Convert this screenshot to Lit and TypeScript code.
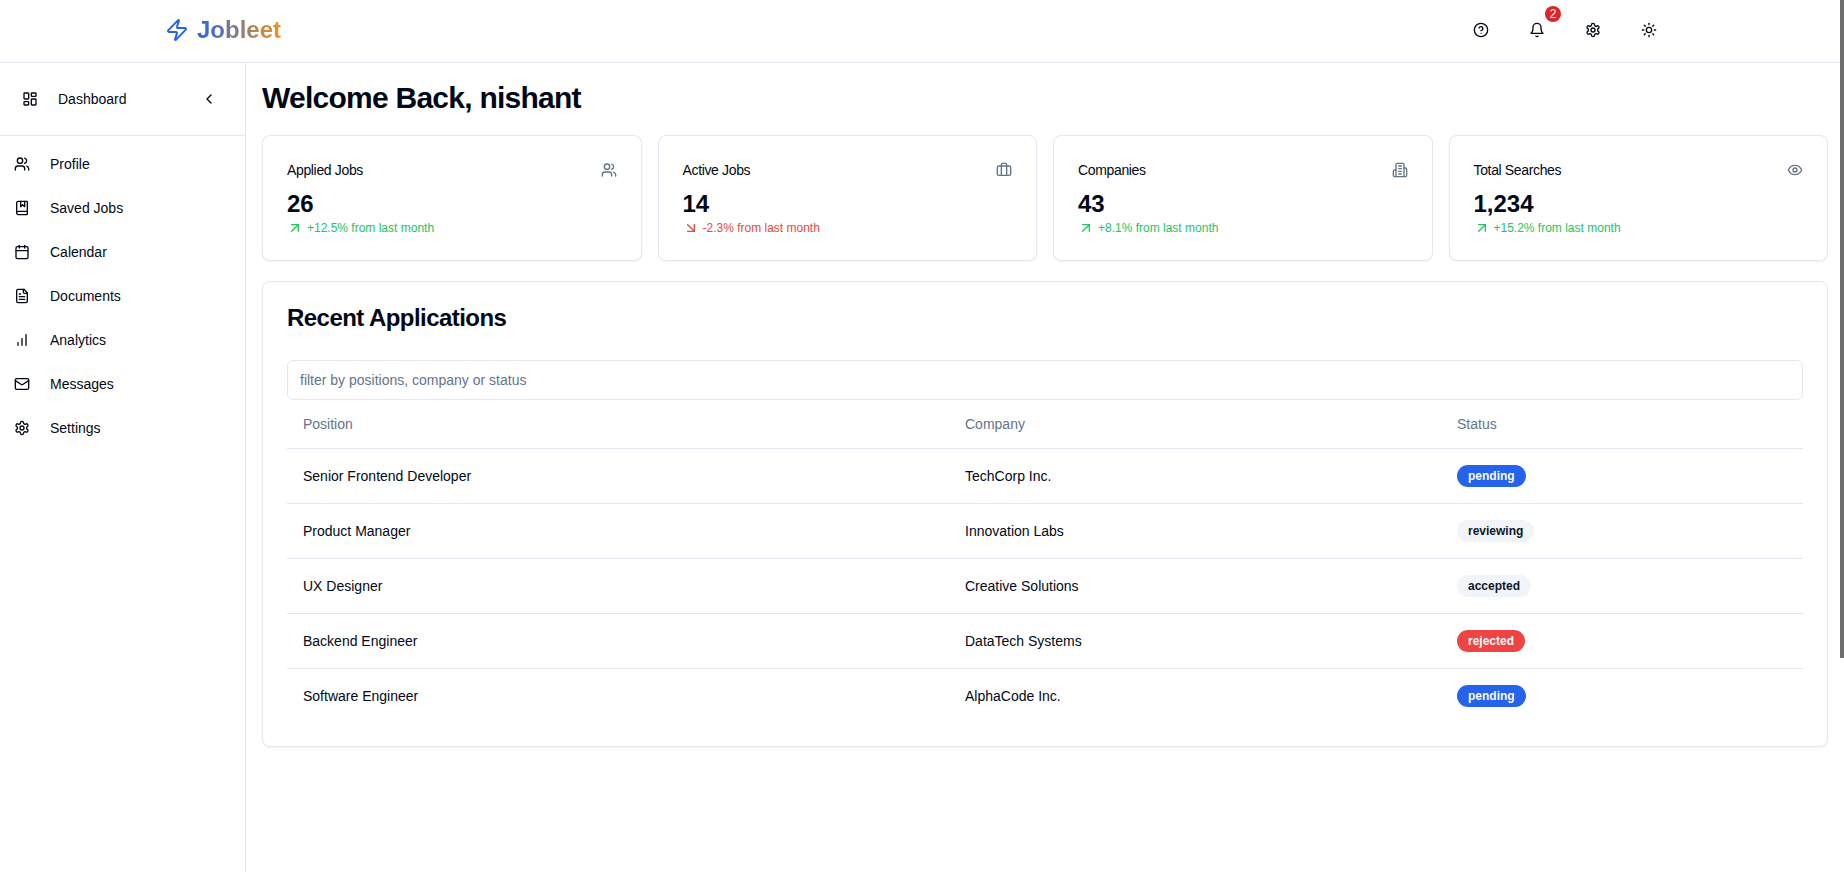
import { css, html, LitElement, svg } from 'lit';
import { customElement } from 'lit/decorators.js';
import { classMap } from 'lit/directives/class-map.js';

const GEAR = svg`<path d="M12.22 2h-.44a2 2 0 0 0-2 2v.18a2 2 0 0 1-1 1.73l-.43.25a2 2 0 0 1-2 0l-.15-.08a2 2 0 0 0-2.73.73l-.22.38a2 2 0 0 0 .73 2.73l.15.1a2 2 0 0 1 1 1.72v.51a2 2 0 0 1-1 1.74l-.15.09a2 2 0 0 0-.73 2.73l.22.38a2 2 0 0 0 2.73.73l.15-.08a2 2 0 0 1 2 0l.43.25a2 2 0 0 1 1 1.73V20a2 2 0 0 0 2 2h.44a2 2 0 0 0 2-2v-.18a2 2 0 0 1 1-1.73l.43-.25a2 2 0 0 1 2 0l.15.08a2 2 0 0 0 2.73-.73l.22-.39a2 2 0 0 0-.73-2.73l-.15-.08a2 2 0 0 1-1-1.74v-.5a2 2 0 0 1 1-1.74l.15-.09a2 2 0 0 0 .73-2.73l-.22-.38a2 2 0 0 0-2.73-.73l-.15.08a2 2 0 0 1-2 0l-.43-.25a2 2 0 0 1-1-1.73V4a2 2 0 0 0-2-2z"/><circle cx="12" cy="12" r="3"/>`;

const ICONS = {
  zap: svg`<path d="M4 14a1 1 0 0 1-.78-1.63l9.9-10.2a.5.5 0 0 1 .86.46l-1.92 6.02A1 1 0 0 0 13 10h7a1 1 0 0 1 .78 1.63l-9.9 10.2a.5.5 0 0 1-.86-.46l1.92-6.02A1 1 0 0 0 11 14z"/>`,
  help: svg`<circle cx="12" cy="12" r="10"/><path d="M9.09 9a3 3 0 0 1 5.83 1c0 2-3 3-3 3"/><path d="M12 17h.01"/>`,
  bell: svg`<path d="M6 8a6 6 0 0 1 12 0c0 7 3 9 3 9H3s3-2 3-9"/><path d="M10.3 21a1.94 1.94 0 0 0 3.4 0"/>`,
  gear: GEAR,
  sun: svg`<circle cx="12" cy="12" r="4"/><path d="M12 2v2"/><path d="M12 20v2"/><path d="m4.93 4.93 1.41 1.41"/><path d="m17.66 17.66 1.41 1.41"/><path d="M2 12h2"/><path d="M20 12h2"/><path d="m6.34 17.66-1.41 1.41"/><path d="m19.07 4.93-1.41 1.41"/>`,
  dashboard: svg`<rect x="3" y="3" width="7" height="9" rx="1"/><rect x="14" y="3" width="7" height="5" rx="1"/><rect x="14" y="12" width="7" height="9" rx="1"/><rect x="3" y="16" width="7" height="5" rx="1"/>`,
  chevron: svg`<path d="m15 18-6-6 6-6"/>`,
  users: svg`<path d="M16 21v-2a4 4 0 0 0-4-4H6a4 4 0 0 0-4 4v2"/><circle cx="9" cy="7" r="4"/><path d="M22 21v-2a4 4 0 0 0-3-3.87"/><path d="M16 3.13a4 4 0 0 1 0 7.75"/>`,
  book: svg`<path d="M10 2v8l3-3 3 3V2"/><path d="M4 19.5v-15A2.5 2.5 0 0 1 6.5 2H19a1 1 0 0 1 1 1v18a1 1 0 0 1-1 1H6.5a1 1 0 0 1 0-5H20"/>`,
  calendar: svg`<path d="M8 2v4"/><path d="M16 2v4"/><rect x="3" y="4" width="18" height="18" rx="2"/><path d="M3 10h18"/>`,
  file: svg`<path d="M15 2H6a2 2 0 0 0-2 2v16a2 2 0 0 0 2 2h12a2 2 0 0 0 2-2V7Z"/><path d="M14 2v4a2 2 0 0 0 2 2h4"/><path d="M10 9H8"/><path d="M16 13H8"/><path d="M16 17H8"/>`,
  chart: svg`<path d="M12 20V10"/><path d="M18 20V4"/><path d="M6 20v-4"/>`,
  mail: svg`<rect x="2" y="4" width="20" height="16" rx="2"/><path d="m22 7-8.97 5.7a1.94 1.94 0 0 1-2.06 0L2 7"/>`,
  briefcase: svg`<path d="M16 20V4a2 2 0 0 0-2-2h-4a2 2 0 0 0-2 2v16"/><rect x="2" y="6" width="20" height="14" rx="2"/>`,
  building: svg`<path d="M6 22V4a2 2 0 0 1 2-2h8a2 2 0 0 1 2 2v18Z"/><path d="M6 12H4a2 2 0 0 0-2 2v6a2 2 0 0 0 2 2h2"/><path d="M18 9h2a2 2 0 0 1 2 2v9a2 2 0 0 1-2 2h-2"/><path d="M10 6h4"/><path d="M10 10h4"/><path d="M10 14h4"/><path d="M10 18h4"/>`,
  eye: svg`<path d="M2 12s3-7 10-7 10 7 10 7-3 7-10 7-10-7-10-7Z"/><circle cx="12" cy="12" r="3"/>`,
  up: svg`<path d="M7 7h10v10"/><path d="M7 17 17 7"/>`,
  down: svg`<path d="m7 7 10 10"/><path d="M17 7v10H7"/>`,
};

type IconName = keyof typeof ICONS;

const icon = (name: IconName, cls = '') => html`
  <svg class="icon ${cls}" viewBox="0 0 24 24" fill="none" stroke="currentColor" stroke-width="2" stroke-linecap="round" stroke-linejoin="round">${ICONS[name]}</svg>
`;

const NAV: { label: string; icon: IconName }[] = [
  { label: 'Profile', icon: 'users' },
  { label: 'Saved Jobs', icon: 'book' },
  { label: 'Calendar', icon: 'calendar' },
  { label: 'Documents', icon: 'file' },
  { label: 'Analytics', icon: 'chart' },
  { label: 'Messages', icon: 'mail' },
  { label: 'Settings', icon: 'gear' },
];

const STATS: { title: string; value: string; change: string; up: boolean; icon: IconName }[] = [
  { title: 'Applied Jobs', value: '26', change: '+12.5% from last month', up: true, icon: 'users' },
  { title: 'Active Jobs', value: '14', change: '-2.3% from last month', up: false, icon: 'briefcase' },
  { title: 'Companies', value: '43', change: '+8.1% from last month', up: true, icon: 'building' },
  { title: 'Total Searches', value: '1,234', change: '+15.2% from last month', up: true, icon: 'eye' },
];

const APPLICATIONS = [
  { position: 'Senior Frontend Developer', company: 'TechCorp Inc.', status: 'pending' },
  { position: 'Product Manager', company: 'Innovation Labs', status: 'reviewing' },
  { position: 'UX Designer', company: 'Creative Solutions', status: 'accepted' },
  { position: 'Backend Engineer', company: 'DataTech Systems', status: 'rejected' },
  { position: 'Software Engineer', company: 'AlphaCode Inc.', status: 'pending' },
];

@customElement('app-root')
export class AppRoot extends LitElement {
  static override styles = css`
    :host {
      display: block;
      position: relative;
      height: 872px;
      overflow: hidden;
      background: #fff;
      color: #020817;
      font-family: 'Liberation Sans', Arial, sans-serif;
      font-size: 14px;
    }

    * {
      box-sizing: border-box;
    }

    .icon {
      display: block;
      width: 16px;
      height: 16px;
      flex: none;
    }

    .header {
      display: flex;
      align-items: center;
      justify-content: space-between;
      height: 63px;
      padding: 0 175px 0 165px;
      border-bottom: 1px solid #e2e8f0;
    }

    .logo {
      display: flex;
      align-items: center;
      gap: 8px;
      margin-top: -2px;
    }

    .logo .icon {
      width: 24px;
      height: 24px;
      color: #2563eb;
    }

    .logo span {
      font-size: 24px;
      font-weight: 700;
      line-height: 32px;
      background: linear-gradient(to right, #2563eb, #f59312);
      -webkit-background-clip: text;
      background-clip: text;
      color: transparent;
    }

    .actions {
      display: flex;
      gap: 16px;
      margin-top: -2px;
    }

    .action {
      position: relative;
      display: flex;
      align-items: center;
      justify-content: center;
      width: 40px;
      height: 40px;
    }

    .badge {
      position: absolute;
      top: -4px;
      right: -4px;
      display: flex;
      align-items: center;
      justify-content: center;
      width: 16px;
      height: 16px;
      border-radius: 50%;
      background: #dc2626;
      color: #fff;
      font-size: 12px;
    }

    .body {
      display: flex;
      height: 809px;
    }

    .sidebar {
      flex: none;
      width: 246px;
      border-right: 1px solid #e2e8f0;
    }

    .sidebar-top {
      display: flex;
      align-items: center;
      height: 73px;
      padding: 0 28px 0 22px;
      border-bottom: 1px solid #e2e8f0;
    }

    .sidebar-top .label {
      flex: 1;
      margin-left: 20px;
    }

    .nav {
      display: flex;
      flex-direction: column;
      gap: 16px;
      padding: 14px;
    }

    .nav-item {
      display: flex;
      align-items: center;
      gap: 20px;
      height: 28px;
    }

    .main {
      flex: 1;
      min-width: 0;
      padding: 15px 16px 16px;
    }

    h1 {
      margin: 0 0 17px;
      font-size: 30px;
      font-weight: 700;
      line-height: 40px;
      letter-spacing: -0.75px;
    }

    .stats {
      display: grid;
      grid-template-columns: repeat(4, 1fr);
      gap: 16px;
      margin-bottom: 20px;
    }

    .card {
      border: 1px solid #e2e8f0;
      border-radius: 8px;
      background: #fff;
      box-shadow: 0 1px 2px 0 rgba(0, 0, 0, 0.05);
    }

    .stat {
      height: 126px;
      padding: 24px;
    }

    .stat-head {
      display: flex;
      align-items: center;
      justify-content: space-between;
      height: 20px;
      letter-spacing: -0.35px;
    }

    .stat-head .icon {
      color: #64748b;
    }

    .stat-value {
      margin-top: 8px;
      font-size: 24px;
      font-weight: 700;
      line-height: 32px;
    }

    .stat-change {
      display: flex;
      align-items: center;
      gap: 4px;
      font-size: 12px;
      line-height: 16px;
    }

    .stat-change.up {
      color: #22c55e;
    }

    .stat-change.down {
      color: #ef4444;
    }

    .recent {
      height: 466px;
      padding: 20px 24px 24px;
    }

    h2 {
      margin: 0 0 26px;
      font-size: 24px;
      font-weight: 700;
      line-height: 32px;
      letter-spacing: -0.55px;
    }

    .filter {
      display: block;
      width: 100%;
      height: 40px;
      padding: 0 12px;
      border: 1px solid #e2e8f0;
      border-radius: 6px;
      outline: 0;
      background: #fff;
      color: #020817;
      font: inherit;
    }

    .filter::placeholder {
      color: #64748b;
    }

    table {
      width: 100%;
      border-collapse: collapse;
      table-layout: fixed;
    }

    .col-position {
      width: 662px;
    }

    .col-company {
      width: 492px;
    }

    th {
      height: 48px;
      padding: 0 16px;
      border-bottom: 1px solid #e2e8f0;
      color: #64748b;
      font-weight: 400;
      text-align: left;
    }

    td {
      height: 55px;
      padding: 0 16px;
      border-bottom: 1px solid #e2e8f0;
    }

    tr:last-child td {
      border-bottom: 0;
    }

    .status {
      display: inline-block;
      padding: 0 11px;
      border-radius: 999px;
      font-size: 12px;
      font-weight: 700;
      line-height: 22px;
      vertical-align: middle;
    }

    .status.pending {
      background: #2563eb;
      color: #f8fafc;
    }

    .status.reviewing,
    .status.accepted {
      background: #f1f5f9;
      color: #0f172a;
    }

    .status.rejected {
      background: #ef4444;
      color: #f8fafc;
    }

    .scrollbar {
      position: absolute;
      top: 0;
      right: 0;
      width: 4px;
      height: 658px;
      background: #6e6e6e;
    }
  `;

  override render() {
    return html`
      <header class="header">
        <div class="logo">${icon('zap')}<span>Jobleet</span></div>
        <div class="actions">
          <div class="action">${icon('help')}</div>
          <div class="action">${icon('bell')}<span class="badge">2</span></div>
          <div class="action">${icon('gear')}</div>
          <div class="action">${icon('sun')}</div>
        </div>
      </header>
      <div class="body">
        <aside class="sidebar">
          <div class="sidebar-top">
            ${icon('dashboard')}
            <span class="label">Dashboard</span>
            ${icon('chevron')}
          </div>
          <nav class="nav">
            ${NAV.map((item) => html`
              <div class="nav-item">${icon(item.icon)}<span>${item.label}</span></div>
            `)}
          </nav>
        </aside>
        <main class="main">
          <h1>Welcome Back, nishant</h1>
          <section class="stats">
            ${STATS.map((stat) => html`
              <div class="card stat">
                <div class="stat-head"><span>${stat.title}</span>${icon(stat.icon)}</div>
                <div class="stat-value">${stat.value}</div>
                <div class="stat-change ${classMap({ up: stat.up, down: !stat.up })}">
                  ${icon(stat.up ? 'up' : 'down')}<span>${stat.change}</span>
                </div>
              </div>
            `)}
          </section>
          <section class="card recent">
            <h2>Recent Applications</h2>
            <input class="filter" placeholder="filter by positions, company or status" />
            <table>
              <colgroup>
                <col class="col-position" />
                <col class="col-company" />
                <col />
              </colgroup>
              <thead>
                <tr><th>Position</th><th>Company</th><th>Status</th></tr>
              </thead>
              <tbody>
                ${APPLICATIONS.map((row) => html`
                  <tr>
                    <td>${row.position}</td>
                    <td>${row.company}</td>
                    <td><span class="status ${row.status}">${row.status}</span></td>
                  </tr>
                `)}
              </tbody>
            </table>
          </section>
        </main>
      </div>
      <div class="scrollbar"></div>
    `;
  }
}

declare global {
  interface HTMLElementTagNameMap {
    'app-root': AppRoot;
  }
}
